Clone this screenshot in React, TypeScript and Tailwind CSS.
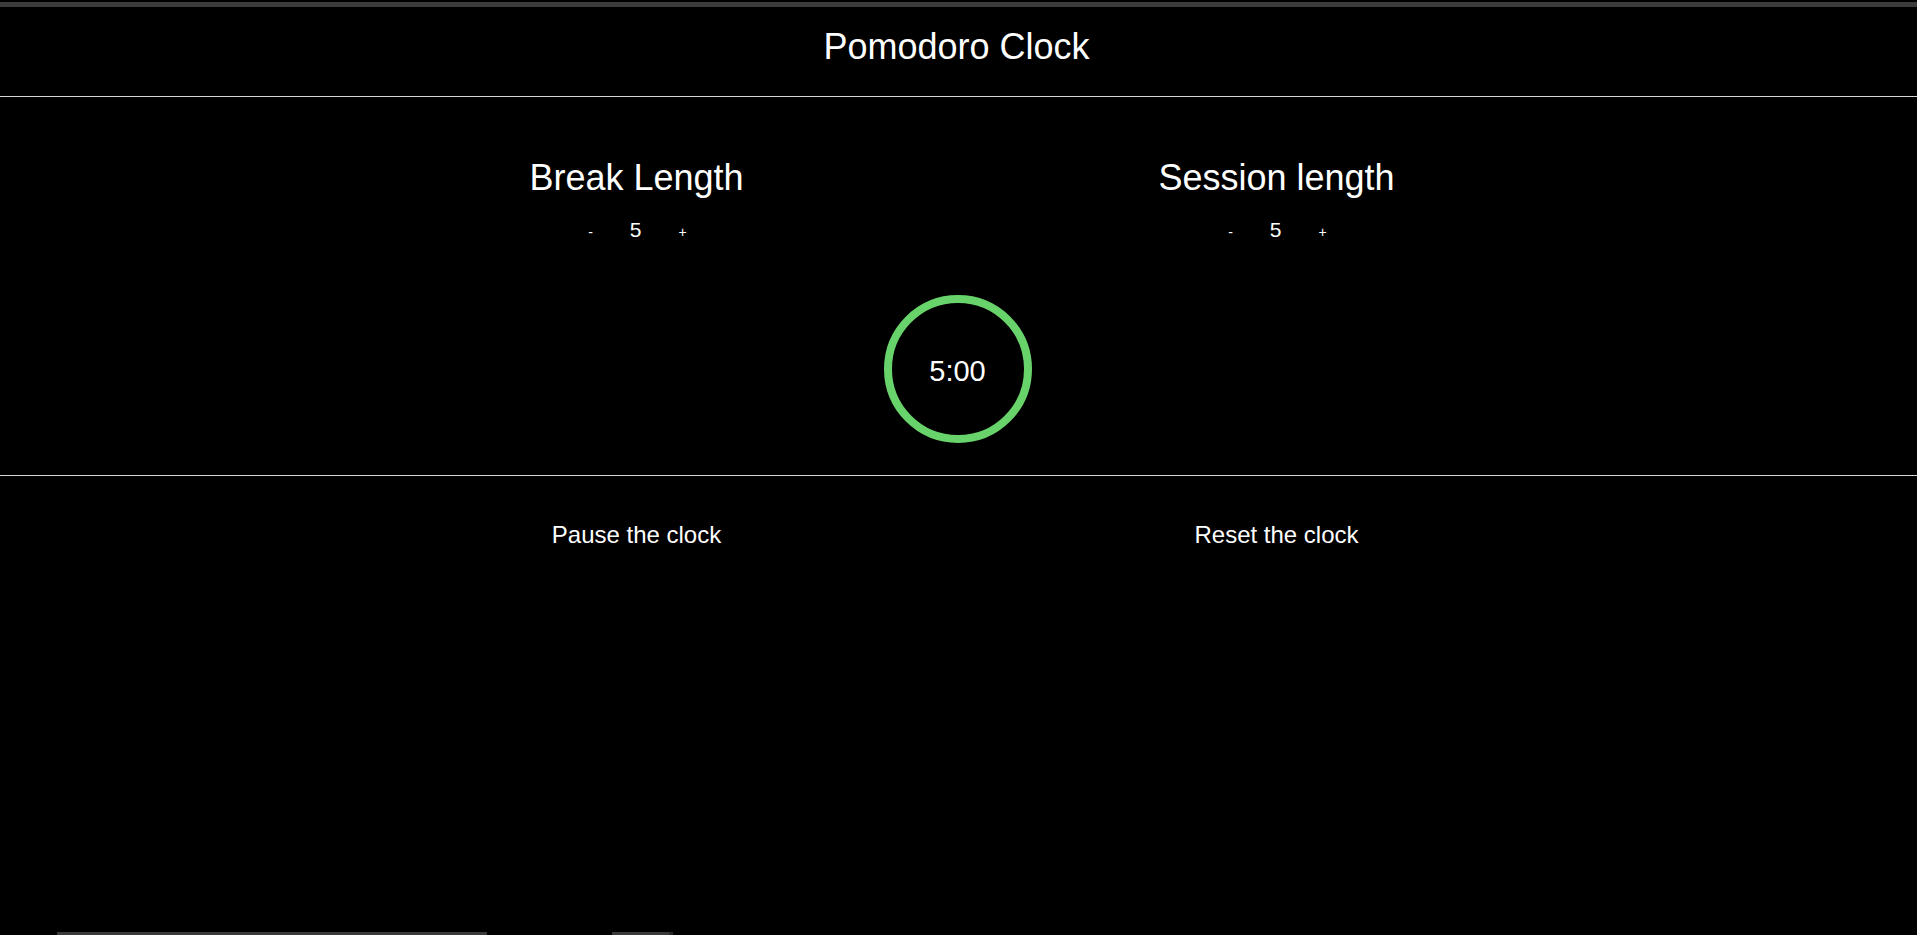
import React from "react";

function Counter({ label, value }: { label: string; value: number }) {
  return (
    <div className="flex flex-col items-center">
      <h2 className="text-[36px] leading-[41px] font-normal text-white">{label}</h2>
      <div className="mt-[20px] flex items-baseline justify-center text-white">
        <button className="w-[46px] text-center text-[14px] leading-[16px] bg-transparent text-white">-</button>
        <span className="w-[46px] pr-[2px] text-center text-[21px] leading-[23px]">{value}</span>
        <button className="w-[46px] text-center text-[14px] leading-[16px] bg-transparent text-white">+</button>
      </div>
    </div>
  );
}

export default function App() {
  return (
    <div
      className="flex h-screen flex-col bg-black text-white overflow-hidden"
      style={{ fontFamily: '"Liberation Sans", Arial, sans-serif' }}
    >
      <div className="h-[2px] bg-black" />
      <div className="h-[5px] bg-[#3c3c3c]" />
      <header className="h-[89px] pt-[19px] pr-[4px] text-center">
        <h1 className="text-[36px] leading-[41px] font-normal">Pomodoro Clock</h1>
      </header>
      <div className="h-px bg-[#d4d4d4]" />
      <section className="pt-[60px] pb-[32px]">
        <div className="pr-[4px]">
          <div className="mx-auto grid max-w-[1280px] grid-cols-2">
            <Counter label="Break Length" value={5} />
            <Counter label="Session length" value={5} />
          </div>
        </div>
        <div className="mt-[54px] flex justify-center pr-[2px]">
          <div className="flex h-[148px] w-[148px] items-center justify-center rounded-full border-[8px] border-[#68d36a]">
            <span className="pt-[4px] text-[29px] leading-[32px]">5:00</span>
          </div>
        </div>
      </section>
      <div className="h-px bg-[#d4d4d4]" />
      <section className="pt-[45px] pr-[4px]">
        <div className="mx-auto grid max-w-[1280px] grid-cols-2 text-center">
          <button className="text-[24px] leading-[28px] bg-transparent text-white">Pause the clock</button>
          <button className="text-[24px] leading-[28px] bg-transparent text-white">Reset the clock</button>
        </div>
      </section>
      <div className="mt-auto flex h-[3px] items-stretch">
        <div className="ml-[57px] w-[430px] bg-[#3a3a3a]" />
        <div className="ml-[125px] w-[57px] bg-[#3a3a3a]" />
        <div className="w-[4px] bg-[#2a2a2a]" />
      </div>
    </div>
  );
}
